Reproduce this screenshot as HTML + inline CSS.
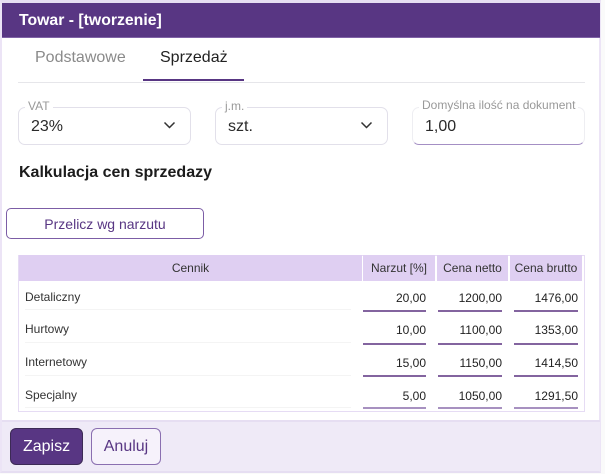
<!DOCTYPE html>
<html><head><meta charset="utf-8"><style>
html,body{margin:0;padding:0;width:605px;height:474px;overflow:hidden;background:#fafafa;font-family:"Liberation Sans",sans-serif;}
div{position:absolute;box-sizing:border-box;white-space:nowrap;}
.t{line-height:16px;}
.lab{font-size:12px;color:#999;background:#fff;padding:0 3px;line-height:12px;height:12px;}
.box{border:1px solid #e2e0ea;border-radius:7px;background:#fff;}
.val{font-size:16px;line-height:20px;color:#2a2a2a;}
.th{background:#dfcff2;font-size:12px;line-height:26px;color:#333;text-align:center;top:255px;height:26px;}
.name{font-size:12px;line-height:14px;color:#333;left:25px;}
.sep{left:25px;width:326px;height:1px;background:#f4f4f4;}
.num{font-size:12px;line-height:14px;color:#222;text-align:right;}
.ul{height:2px;background:#83649f;}
</style></head><body>
<div style="left:0;top:0;width:605px;height:474px;background:#fafafa"></div>
<div style="left:0;top:0;width:601px;height:473px;background:#fff;border-left:2px solid #ece4f6;border-top:3px solid #e6def2;border-right:2px solid #ece4f6;border-bottom:2px solid #e6def2"></div>
<div style="left:2px;top:3px;width:598px;height:35px;background:#583683;border-bottom:1px solid #7f62a6"></div>
<div class="t" style="left:19px;top:13px;font-size:15.8px;font-weight:bold;color:#fff">Towar - [tworzenie]</div>

<div class="t" style="left:35px;top:50px;font-size:16px;color:#8a8a8a">Podstawowe</div>
<div class="t" style="left:160px;top:50px;font-size:16px;color:#222">Sprzedaż</div>
<div style="left:18px;top:82px;width:567px;height:1px;background:#e6e6ea"></div>
<div style="left:143px;top:79px;width:101px;height:2px;background:#583683"></div>

<div class="box" style="left:18px;top:107px;width:173px;height:38px"></div>
<div class="lab" style="left:25px;top:100px">VAT</div>
<div class="val" style="left:31px;top:117px">23%</div>
<svg style="position:absolute;left:163px;top:121px" width="13" height="9" viewBox="0 0 13 9"><path d="M1.5 1.5 L6.5 6.5 L11.5 1.5" fill="none" stroke="#333" stroke-width="1.5"/></svg>

<div class="box" style="left:215px;top:107px;width:173px;height:38px"></div>
<div class="lab" style="left:222px;top:100px">j.m.</div>
<div class="val" style="left:228px;top:117px">szt.</div>
<svg style="position:absolute;left:360px;top:121px" width="13" height="9" viewBox="0 0 13 9"><path d="M1.5 1.5 L6.5 6.5 L11.5 1.5" fill="none" stroke="#333" stroke-width="1.5"/></svg>

<div class="box" style="left:412px;top:107px;width:173px;height:38px;border-color:#eeeef2;border-bottom:1px solid #a48fc4"></div>
<div class="lab" style="left:419px;top:99px">Domyślna ilość na dokument</div>
<div class="val" style="left:425px;top:117px">1,00</div>

<div class="t" style="left:19px;top:165px;font-size:16px;font-weight:bold;color:#1c1c1c">Kalkulacja cen sprzedazy</div>

<div style="left:6px;top:208px;width:198px;height:31px;border:1px solid #7c5da6;border-radius:5px;background:#fff;text-align:center;font-size:14px;line-height:30px;color:#583683">Przelicz wg narzutu</div>

<div style="left:18px;top:255px;width:567px;height:157px;border:1px solid #e6dcf4;background:#fff"></div>
<div class="th" style="left:19px;width:343px">Cennik</div>
<div class="th" style="left:363px;width:72px">Narzut [%]</div>
<div class="th" style="left:437px;width:71px">Cena netto</div>
<div class="th" style="left:510px;width:72px">Cena brutto</div>

<div class="name" style="top:290px">Detaliczny</div>
<div class="sep" style="top:309px"></div>
<div class="num" style="left:363px;width:63px;top:291px">20,00</div>
<div class="num" style="left:438px;width:64px;top:291px">1200,00</div>
<div class="num" style="left:514px;width:64px;top:291px">1476,00</div>
<div class="ul" style="left:363px;width:63px;top:310px"></div>
<div class="ul" style="left:438px;width:64px;top:310px"></div>
<div class="ul" style="left:514px;width:64px;top:310px"></div>

<div class="name" style="top:322px">Hurtowy</div>
<div class="sep" style="top:342px"></div>
<div class="num" style="left:363px;width:63px;top:323px">10,00</div>
<div class="num" style="left:438px;width:64px;top:323px">1100,00</div>
<div class="num" style="left:514px;width:64px;top:323px">1353,00</div>
<div class="ul" style="left:363px;width:63px;top:343px"></div>
<div class="ul" style="left:438px;width:64px;top:343px"></div>
<div class="ul" style="left:514px;width:64px;top:343px"></div>

<div class="name" style="top:355px">Internetowy</div>
<div class="sep" style="top:375px"></div>
<div class="num" style="left:363px;width:63px;top:356px">15,00</div>
<div class="num" style="left:438px;width:64px;top:356px">1150,00</div>
<div class="num" style="left:514px;width:64px;top:356px">1414,50</div>
<div class="ul" style="left:363px;width:63px;top:375px"></div>
<div class="ul" style="left:438px;width:64px;top:375px"></div>
<div class="ul" style="left:514px;width:64px;top:375px"></div>

<div class="name" style="top:388px">Specjalny</div>
<div class="sep" style="top:407px"></div>
<div class="num" style="left:363px;width:63px;top:389px">5,00</div>
<div class="num" style="left:438px;width:64px;top:389px">1050,00</div>
<div class="num" style="left:514px;width:64px;top:389px">1291,50</div>
<div class="ul" style="left:363px;width:63px;top:407px;background:#a791c0"></div>
<div class="ul" style="left:438px;width:64px;top:407px;background:#a791c0"></div>
<div class="ul" style="left:514px;width:64px;top:407px;background:#a791c0"></div>

<div style="left:2px;top:420px;width:598px;height:51px;background:#efeaf7;border-top:2px solid #e6def2"></div>
<div style="left:10px;top:428px;width:73px;height:37px;background:#583683;border:1px solid #3c2a55;border-radius:6px;color:#fff;text-align:center;font-size:16px;line-height:35px">Zapisz</div>
<div style="left:91px;top:428px;width:70px;height:37px;background:#f6f2fb;border:1px solid #8a6fb0;border-radius:6px;color:#583683;text-align:center;font-size:16px;line-height:35px">Anuluj</div>
</body></html>
